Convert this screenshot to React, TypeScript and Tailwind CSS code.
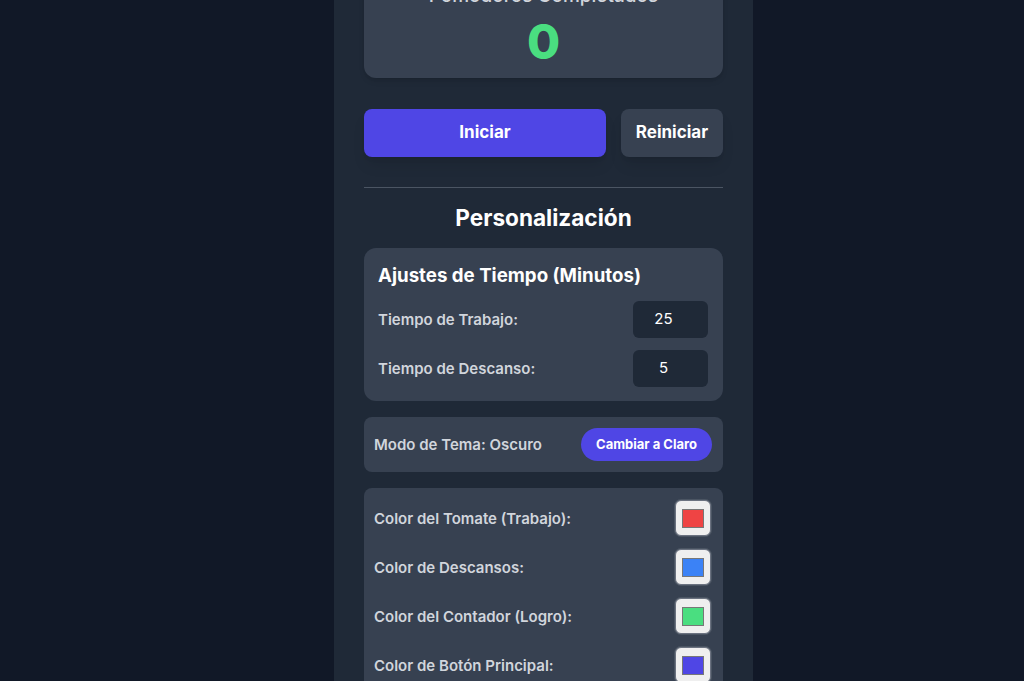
import React from "react";

function ColorBox({ color }: { color: string }) {
  return (
    <div className="w-[36px] h-[36px] rounded-[6px] bg-[#efefef] border border-[#6b7280] shadow-[0_0_0_1px_#4b5563] flex items-center justify-center">
      <div className="w-[22px] h-[19px] border border-[#777777]" style={{ backgroundColor: color }} />
    </div>
  );
}

export default function App() {
  const font = { fontFamily: "Inter, 'Noto Sans', sans-serif" };
  const colors: [string, string][] = [
    ["Color del Tomate (Trabajo):", "#ef4444"],
    ["Color de Descansos:", "#3b82f6"],
    ["Color del Contador (Logro):", "#4ade80"],
    ["Color de Botón Principal:", "#4f46e5"],
  ];
  return (
    <div className="min-h-screen bg-[#111827] overflow-hidden" style={font}>
      <div className="ml-[334px] w-[419px] min-h-screen bg-[#1f2937] px-[30px] flex flex-col pb-10">
        <div className="-mt-[34px] bg-[#374151] rounded-xl pt-4 pb-3 flex flex-col items-center shadow-md">
          <div className="text-[19px] leading-7 font-medium text-gray-300">Pomodoros Completados</div>
          <div className="mt-[8px] text-5xl leading-[48px] font-extrabold text-[#4ade80]">0</div>
        </div>

        <div className="mt-[31px] flex gap-[15px]">
          <button className="flex-1 h-[48px] rounded-lg bg-[#4f46e5] text-white font-bold text-[17px] shadow-lg">
            Iniciar
          </button>
          <button className="w-[102px] h-[48px] rounded-lg bg-[#374151] text-white font-bold text-[17px] shadow-lg">
            Reiniciar
          </button>
        </div>

        <div className="mt-[30px] border-t border-[#4b5563]" />

        <h2 className="mt-[14px] text-center text-[22.6px] leading-8 font-bold text-white">Personalización</h2>

        <div className="mt-[14px] bg-[#374151] rounded-xl pl-[14px] pr-[15px] pt-[14px] pb-[14px]">
          <h3 className="text-[18.7px] leading-7 font-bold text-white">Ajustes de Tiempo (Minutos)</h3>
          <div className="mt-[11px] flex flex-col gap-[12px]">
            <div className="flex items-center justify-between">
              <span className="text-[15px] font-semibold text-gray-300 pt-[2px]">Tiempo de Trabajo:</span>
              <div className="w-[75px] h-[37px] rounded-md bg-[#1f2937] flex items-center justify-center pr-[14px] text-white text-[15px]">
                25
              </div>
            </div>
            <div className="flex items-center justify-between">
              <span className="text-[15px] font-semibold text-gray-300 pt-[2px]">Tiempo de Descanso:</span>
              <div className="w-[75px] h-[37px] rounded-md bg-[#1f2937] flex items-center justify-center pr-[14px] text-white text-[15px]">
                5
              </div>
            </div>
          </div>
        </div>

        <div className="mt-[16px] bg-[#374151] rounded-lg pl-[10px] pr-[11px] pt-[11px] pb-[11px] h-[55px] flex items-center justify-between">
          <span className="text-[15px] font-semibold text-gray-300 pt-[2px]">Modo de Tema: Oscuro</span>
          <button className="h-[33px] px-[15px] rounded-full bg-[#4f46e5] text-white text-[13px] font-bold">
            Cambiar a Claro
          </button>
        </div>

        <div className="mt-[16px] bg-[#374151] rounded-lg pl-[10px] pr-[12px] pt-[12px] pb-[12px] flex flex-col gap-[13px]">
          {colors.map(([label, c]) => (
            <div key={label} className="flex items-center justify-between">
              <span className="text-[15px] font-semibold text-gray-300 pt-[2px]">{label}</span>
              <ColorBox color={c} />
            </div>
          ))}
        </div>
      </div>
    </div>
  );
}
